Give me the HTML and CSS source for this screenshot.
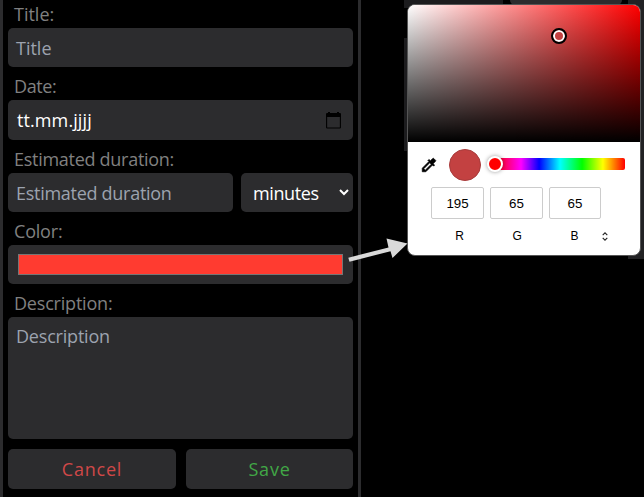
FILE: index.html
```html
<!DOCTYPE html>
<html lang="en">
<head>
<meta charset="utf-8">
<title>Task form</title>
<link rel="stylesheet" href="styles.css">
</head>
<body>
<main class="app">
  <form class="form">
    <div class="label"><span class="t-title">Title:</span></div>
    <div class="field muted"><span class="t-title">Title</span></div>
    <div class="label"><span class="t-date">Date:</span></div>
    <div class="field date"><span class="t-value">tt.mm.jjjj</span>
      <svg class="calendar" width="15" height="17" viewBox="0 0 15 17"><path d="M.6 4v11.4q0 .6.6.6h12.6q.6 0 .6-.6V4" fill="none" stroke="#000" stroke-width="1.1"/><path d="M0 2.2Q0 1 1 1h1V0h2v1h7V0h2v1h1q1 0 1 1.200V5H0z"/></svg>
    </div>
    <div class="label"><span class="t-est">Estimated duration:</span></div>
    <div class="pair">
      <div class="field muted duration"><span class="t-est">Estimated duration</span></div>
      <div class="field unit"><span class="t-min">minutes</span>
        <svg width="10" height="7" viewBox="0 0 10 7"><path d="M1 1l4 4 4-4" fill="none" stroke="#fff" stroke-width="2"/></svg>
      </div>
    </div>
    <div class="label"><span class="t-color">Color:</span></div>
    <div class="field color"><div class="swatch"></div></div>
    <div class="label"><span class="t-desc">Description:</span></div>
    <div class="field muted area"><span class="t-desc">Description</span></div>
    <div class="actions">
      <div class="button cancel">Cancel</div>
      <div class="button save">Save</div>
    </div>
  </form>
  <section class="stage">
    <div class="panel panel-a"></div>
    <div class="panel panel-b"></div>
    <div class="panel panel-c"></div>
    <div class="panel panel-d"></div>
    <div class="picker">
      <div class="shade"><div class="cursor"></div></div>
      <div class="tools">
        <svg class="dropper" width="18" height="18" viewBox="0 0 24 24"><path d="M20.71 5.63l-2.34-2.34a1 1 0 0 0-1.41 0l-3.12 3.12-1.93-1.91-1.41 1.41 1.42 1.42L3 16.25V21h4.75l8.92-8.92 1.42 1.42 1.41-1.41-1.92-1.92 3.12-3.12a1 1 0 0 0 .01-1.42zM6.92 19L5 17.08l8.06-8.06 1.92 1.92z" stroke="#000" stroke-width=".9"/></svg>
        <div class="current"></div>
        <div class="hue"><div class="thumb"></div></div>
      </div>
      <div class="numbers">
        <div class="number">195</div>
        <div class="number">65</div>
        <div class="number">65</div>
      </div>
      <div class="channels">
        <span>R</span><span>G</span><span>B</span>
        <svg class="stepper" width="6" height="9" viewBox="0 0 6 9"><path d="M.7 3.200L3 .9l2.3 2.3M.7 5.800L3 8.100l2.300-2.300" fill="none" stroke="#222" stroke-width="1.1"/></svg>
      </div>
    </div>
  </section>
  <svg class="arrow" width="62" height="30" viewBox="0 0 62 30"><path d="M.3 22.700L40.500 12.400 38.500 3.500 59.500 8.500 44.500 23 42.500 16.200 1.500 26.700z" fill="#d9d9d9"/></svg>
</main>
</body>
</html>
```
FILE: styles.css
```css
* { box-sizing: border-box; }
body { margin: 0; background: #000; font-family: "Open Sans", "Noto Sans", sans-serif; }
.app { position: relative; display: flex; width: 644px; height: 497px; overflow: hidden; }
.form { width: 361px; height: 497px; padding: 0 5px; border: solid #2c2c2e; border-width: 0 3px; font-size: 18px; }
.label { height: 33px; padding-left: 6px; line-height: 39px; color: #808080; white-space: nowrap; }
.label:first-child { height: 28px; line-height: 29px; }
.field { display: flex; align-items: center; height: 39px; padding: 0 8px; border-radius: 5px; background: #2c2c2e; color: #fff; white-space: nowrap; }
.muted { color: #9ca3af; }
.date { height: 40px; justify-content: space-between; padding: 0 12px 0 9px; }
.pair { display: flex; gap: 8px; }
.duration { width: 225px; }
.unit { width: 112px; justify-content: space-between; padding: 0 4px 0 12px; }
.color { padding: 0 10px; }
.swatch { width: 100%; height: 21px; border: 1px solid #767676; background: #ff3b30; }
.area { height: 122px; align-items: flex-start; padding-top: 7px; }
.actions { display: grid; grid-template-columns: 168px 167px; gap: 10px; margin-top: 10px; }
.button { height: 40px; border-radius: 5px; background: #2c2c2e; text-align: center; line-height: 41px; letter-spacing: .8px; }
.cancel { color: #d04848; }
.save { color: #41a746; }
.t-title { letter-spacing: 0; }
.t-date { letter-spacing: -.4px; }
.t-value { letter-spacing: .1px; }
.t-est { letter-spacing: -.28px; }
.t-min { letter-spacing: -.4px; }
.t-color { letter-spacing: -.2px; }
.t-desc { letter-spacing: -.2px; }
.stage { position: relative; flex: 1; padding: 4px 3px 0 46px; }
.panel { position: absolute; background: #1c1c1e; }
.panel-a { left: 43px; top: 0; width: 99px; height: 8px; }
.panel-b { left: 149px; top: 0; width: 112px; height: 5px; border-radius: 0 0 5px 5px; background: #2c2c2e; }
.panel-c { left: 267px; top: 0; width: 16px; height: 259px; background: #222224; }
.panel-d { left: 43px; top: 38px; width: 10px; height: 113px; }
.picker { position: relative; width: 234px; height: 252px; border: 1px solid #555; border-radius: 8px; overflow: hidden; background: #fff; font-family: "Liberation Sans", sans-serif; color: #000; }
.shade { height: 137px; background: linear-gradient(to top, #000, transparent), linear-gradient(to right, #fff, red); }
.cursor { position: absolute; left: 143px; top: 23px; width: 16px; height: 16px; border: 2px solid #000; border-radius: 50%; background: #c34141; box-shadow: inset 0 0 0 2px #fff; }
.tools { display: flex; align-items: center; height: 45px; padding-left: 12px; }
.current { width: 32px; height: 32px; margin-left: 11px; border: 1px solid #a83b3b; border-radius: 50%; background: #c34141; }
.hue { position: relative; width: 130px; height: 12px; margin: -2px 0 0 14px; border-radius: 2px; background: linear-gradient(to right, red, #f0f 20%, #00f 34%, #0ff 50%, #0f0 67%, #ff0 83%, red); }
.thumb { position: absolute; left: -8px; top: -2px; width: 16px; height: 16px; border: 2px solid #fff; border-radius: 50%; background: red; box-shadow: 0 0 4px #0006; }
.numbers { display: grid; grid-template-columns: 53px 53px 52px; gap: 6px; padding-left: 23px; }
.number { height: 32px; border: 1px solid #ccc; border-radius: 2px; text-align: center; font-size: 13.33px; line-height: 31px; }
.channels { display: flex; align-items: center; margin-top: 9px; padding-left: 23px; font-size: 12px; line-height: 16px; text-align: center; }
.channels span { width: 57.4px; }
.stepper { margin-left: -1px; }
.arrow { position: absolute; left: 348px; top: 235px; }
```
